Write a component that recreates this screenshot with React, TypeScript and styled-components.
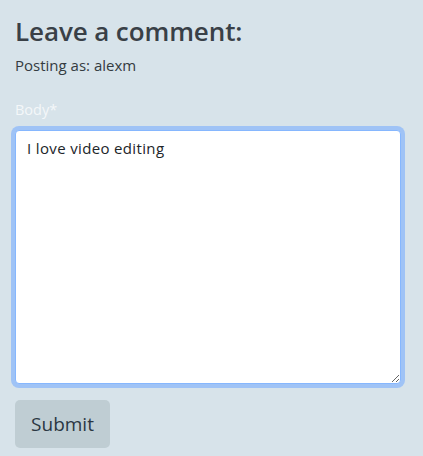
import React, { useEffect, useRef } from 'react';
import styled, { createGlobalStyle } from 'styled-components';

const GlobalStyle = createGlobalStyle`
  html, body {
    margin: 0;
    padding: 0;
    background: #d7e3ea;
  }
  body {
    font-family: "Open Sans", "Noto Sans", sans-serif;
    color: #343b41;
  }
`;

const Page = styled.div`
  padding: 14px 15px 8px 15px;
  width: 386px;
`;

const Heading = styled.h2`
  margin: 0;
  font-size: 26px;
  font-weight: 600;
  line-height: 34px;
  color: #394047;
  letter-spacing: -0.1px;
`;

const PostingAs = styled.p`
  margin: 6px 0 0 0;
  font-size: 15px;
  line-height: 22px;
  color: #343b41;
`;

const Label = styled.label`
  display: block;
  margin-top: 24px;
  font-size: 14.5px;
  line-height: 20px;
  color: #f4f7f9;
`;

const TextArea = styled.textarea`
  display: block;
  box-sizing: border-box;
  width: 100%;
  height: 254px;
  margin-top: 10px;
  padding: 6px 10px 8px 11px;
  font-family: "Open Sans", "Noto Sans", sans-serif;
  font-size: 15px;
  letter-spacing: 0.35px;
  line-height: 22px;
  color: #212529;
  background: #fff;
  border: 1px solid #86b7fe;
  border-radius: 4px;
  box-shadow: 0 0 0 4px #9fc3f6;
  outline: none;
  resize: both;
  caret-color: #212529;
`;

const SubmitButton = styled.button`
  display: block;
  margin-top: 16px;
  width: 95px;
  height: 48px;
  border: none;
  border-radius: 5px;
  background: #bfcdd3;
  color: #2b3743;
  font-family: "Open Sans", "Noto Sans", sans-serif;
  font-size: 19px;
  cursor: pointer;
`;

export default function App() {
  const ref = useRef<HTMLTextAreaElement>(null);

  useEffect(() => {
    const el = ref.current;
    if (el) {
      el.focus();
      el.selectionStart = el.selectionEnd = el.value.length;
    }
  }, []);

  return (
    <>
      <GlobalStyle />
      <Page>
        <Heading>Leave a comment:</Heading>
        <PostingAs>Posting as: alexm</PostingAs>
        <Label htmlFor="body">Body*</Label>
        <TextArea id="body" ref={ref} defaultValue="I love video editing" />
        <SubmitButton type="submit">Submit</SubmitButton>
      </Page>
    </>
  );
}
